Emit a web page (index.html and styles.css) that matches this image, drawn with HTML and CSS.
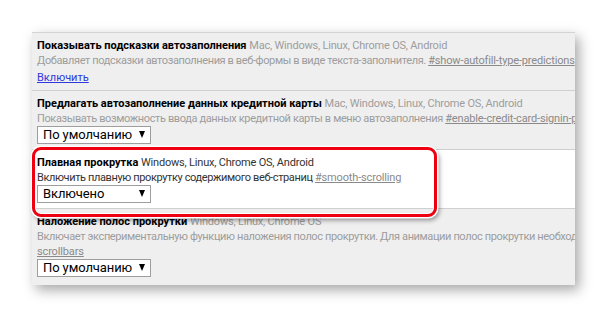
FILE: index.html
```html
<!DOCTYPE html>
<html lang="ru">
<head>
<meta charset="utf-8">
<link rel="stylesheet" href="styles.css">
</head>
<body>
<div class="stage">
  <div class="panel">
    <div class="row dim first">
      <div class="line"><span class="title">Показывать подсказки автозаполнения</span> <span class="os">Mac, Windows, Linux, Chrome OS, Android</span></div>
      <div class="line desc">Добавляет подсказки автозаполнения в веб-формы в виде текста-заполнителя. <a class="perm">#show-autofill-type-predictions</a></div>
      <div class="line act-line"><a class="act">Включить</a></div>
    </div>
    <div class="row dim">
      <div class="line"><span class="title">Предлагать автозаполнение данных кредитной карты</span> <span class="os">Mac, Windows, Linux, Chrome OS, Android</span></div>
      <div class="line desc">Показывать возможность ввода данных кредитной карты в меню автозаполнения <a class="perm">#enable-credit-card-signin-promo</a></div>
      <div class="select"><span class="val">По умолчанию</span><span class="arrow"></span></div>
    </div>
    <div class="row hl">
      <div class="line"><span class="title">Плавная прокрутка</span> <span class="os">Windows, Linux, Chrome OS, Android</span></div>
      <div class="line desc">Включить плавную прокрутку содержимого веб-страниц <a class="perm">#smooth-scrolling</a></div>
      <div class="select"><span class="val">Включено</span><span class="arrow"></span></div>
    </div>
    <div class="row dim last">
      <div class="line"><span class="title">Наложение полос прокрутки</span> <span class="os">Windows, Linux, Chrome OS</span></div>
      <div class="line desc">Включает экспериментальную функцию наложения полос прокрутки. Для анимации полос прокрутки необходимо включить</div>
      <div class="line"><a class="perm">scrollbars</a></div>
      <div class="select"><span class="val">По умолчанию</span><span class="arrow"></span></div>
    </div>
  </div>
  <div class="mark"></div>
</div>
</body>
</html>
```

FILE: styles.css
```css
html, body {
  margin: 0;
  padding: 0;
  background: #ffffff;
}
body {
  font-family: Roboto, "Noto Sans", sans-serif;
  font-size: 11px;
  color: #000;
}
.stage {
  position: relative;
  width: 607px;
  height: 318px;
  padding: 32px 0 0 32px;
  box-sizing: border-box;
}
.panel {
  width: 543px;
  height: 253px;
  background: #efefef;
  border-top: 1px solid #d4d4d4;
  box-sizing: border-box;
  overflow: hidden;
  box-shadow: 4px 5px 12px rgba(0, 0, 0, 0.35);
}
.row {
  padding: 5px 5px 5px;
  border-top: 1px solid #cfcfcf;
  white-space: nowrap;
}
.row.first {
  border-top: none;
}
.row.hl {
  background: #ffffff;
}
.line {
  line-height: 15px;
  height: 15px;
}
.act-line {
  margin-top: 2px;
}
.title {
  font-weight: bold;
  color: #000;
  font-size: 11px;
}
.os {
  color: #9d9d9d;
  letter-spacing: -0.2px;
}
.desc {
  color: #9d9d9d;
  letter-spacing: -0.38px;
}
.hl .os, .hl .desc {
  color: #333;
}
.perm {
  color: #8a8a8a;
  text-decoration: underline;
  letter-spacing: -0.15px;
}
.act {
  color: #2e38dd;
  text-decoration: underline;
}
.select {
  width: 114px;
  height: 18px;
  box-sizing: border-box;
  border: 1px solid #9e9e9e;
  background: #fff;
  display: flex;
  align-items: center;
  justify-content: space-between;
  padding: 0 5px 0 5px;
  font-size: 13px;
  letter-spacing: -0.1px;
  color: #000;
  white-space: nowrap;
}
.val {
  line-height: 16px;
}
.arrow {
  width: 0;
  height: 0;
  border-left: 3.5px solid transparent;
  border-right: 3.5px solid transparent;
  border-top: 7px solid #000;
  flex-shrink: 0;
  margin-top: -2px;
}
.mark {
  position: absolute;
  left: 32px;
  top: 147px;
  width: 405px;
  height: 70px;
  box-sizing: border-box;
  border: 3px solid #ee0010;
  border-radius: 9px;
  box-shadow: 0 0 0 1.5px #ffffff, 2px 3px 5px rgba(0, 0, 0, 0.45), inset 0 0 0 1px #ffffff;
}
```
